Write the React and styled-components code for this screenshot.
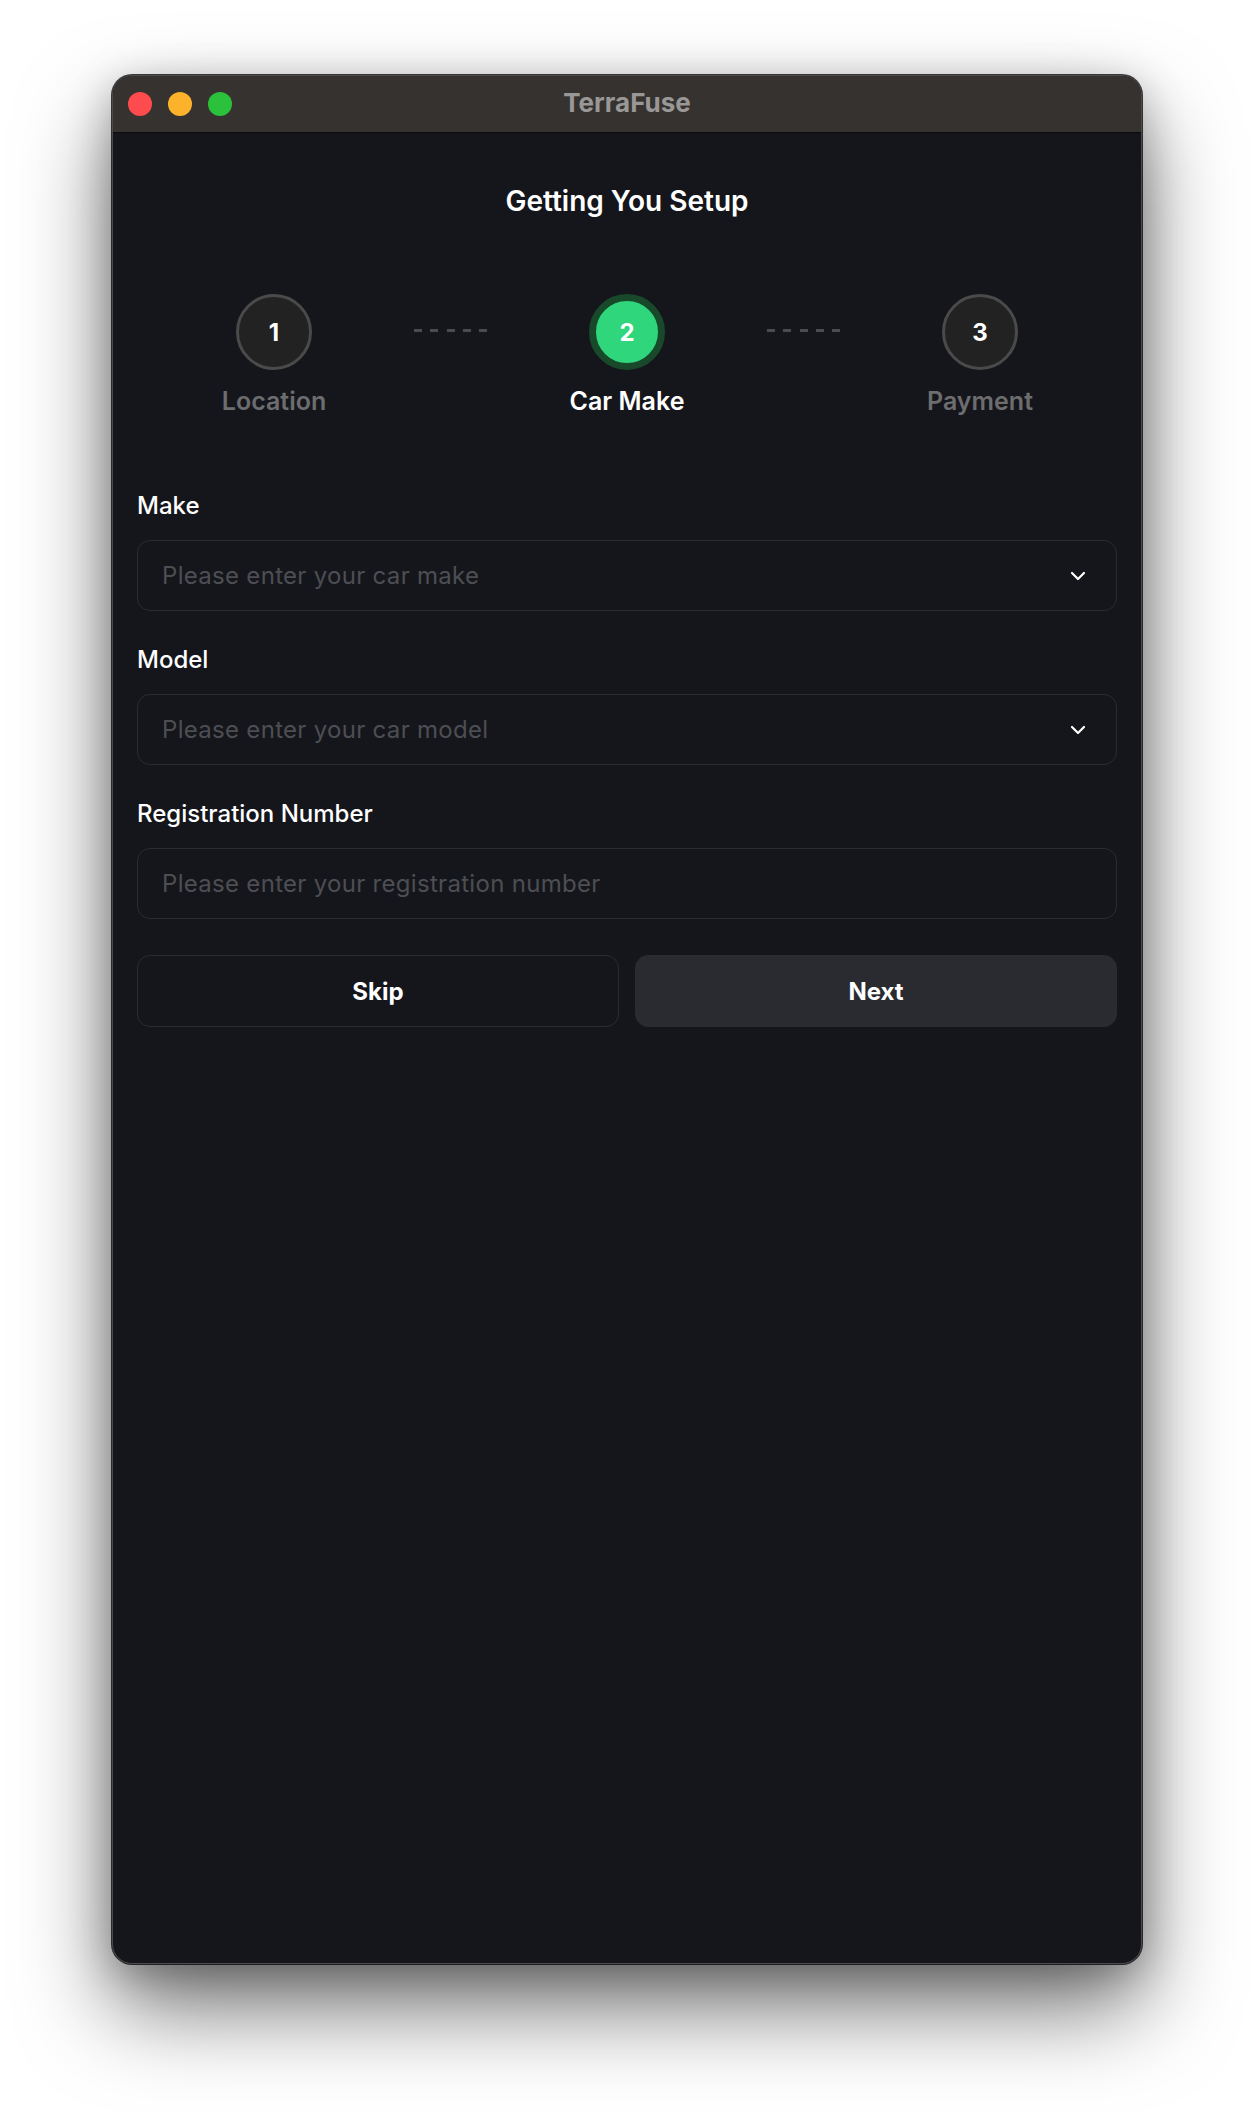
import styled, { createGlobalStyle } from "styled-components";

const GlobalStyle = createGlobalStyle`
  html, body {
    margin: 0;
    padding: 0;
    background: #ffffff;
  }
  body {
    font-family: Inter, "Noto Sans", "Liberation Sans", sans-serif;
    -webkit-font-smoothing: antialiased;
  }
`;

// page around the window
const Desktop = styled.div`
  padding: 75px 112px 148px;
`;

const Window = styled.div`
  width: 1030px;
  height: 1889px;
  box-sizing: border-box;
  border-radius: 20px;
  overflow: hidden;
  background: #15161b;
  border: 1px solid #4a4a4f;
  box-shadow: 0 0 0 1px rgba(0, 0, 0, 0.75), 0 44px 90px rgba(0, 0, 0, 0.55),
    0 10px 40px rgba(0, 0, 0, 0.25);
  display: flex;
  flex-direction: column;
`;

const TitleBar = styled.div`
  height: 56px;
  flex-shrink: 0;
  background: #353230;
  border-bottom: 1px solid #0b0b0c;
  display: flex;
  align-items: center;
  position: relative;
  padding-left: 15px;
`;

const Lights = styled.div`
  display: flex;
  gap: 16px;
`;

const Light = styled.span`
  width: 24px;
  height: 24px;
  border-radius: 50%;
  background: ${(p) => p.color};
`;

const WindowTitle = styled.div`
  position: absolute;
  left: 0;
  right: 0;
  top: 12px;
  text-align: center;
  font-size: 26px;
  line-height: 30px;
  font-weight: 700;
  color: #9a9896;
  pointer-events: none;
`;

const Content = styled.div`
  flex: 1;
  padding: 50px 24px 0;
  display: flex;
  flex-direction: column;
`;

const Heading = styled.h1`
  margin: 0;
  text-align: center;
  font-size: 28px;
  line-height: 36px;
  font-weight: 600;
  color: #ffffff;
`;

// stepper
const Stepper = styled.div`
  display: flex;
  justify-content: center;
  align-items: flex-start;
  margin-top: 75px;
`;

const Step = styled.div`
  width: 160px;
  display: flex;
  flex-direction: column;
  align-items: center;
  gap: 16px;
`;

const Circle = styled.div`
  width: 76px;
  height: 76px;
  box-sizing: border-box;
  border-radius: 50%;
  display: flex;
  align-items: center;
  justify-content: center;
  font-size: 24px;
  font-weight: 700;
  color: #ffffff;
  background: ${(p) => (p.active ? "#2fd67b" : "#222222")};
  border: ${(p) => (p.active ? "7px solid #18492b" : "3px solid #4a4a4b")};
`;

const StepLabel = styled.div`
  font-size: 25px;
  line-height: 30px;
  font-weight: 600;
  color: ${(p) => (p.active ? "#ffffff" : "#6d6d70")};
`;

const Connector = styled.div`
  width: 73px;
  height: 3px;
  margin: 35px 60px 0;
  background: repeating-linear-gradient(
    to right,
    #4b4b4f 0 8px,
    transparent 8px 16.3px
  );
`;

// form
const Form = styled.div`
  margin-top: 75px;
  display: flex;
  flex-direction: column;
  gap: 34px;
`;

const Field = styled.div`
  display: flex;
  flex-direction: column;
  gap: 20px;
`;

const Label = styled.label`
  font-size: 24px;
  line-height: 29px;
  font-weight: 500;
  color: #ffffff;
`;

const InputBox = styled.div`
  height: 71px;
  box-sizing: border-box;
  border: 1.5px solid #2b2c31;
  border-radius: 13px;
  background: #15161b;
  display: flex;
  align-items: center;
  justify-content: space-between;
  padding: 0 30px 0 24px;
`;

const Placeholder = styled.span`
  font-size: 24px;
  letter-spacing: 0.3px;
  color: #4d4e53;
`;

const Actions = styled.div`
  display: grid;
  grid-template-columns: 1fr 1fr;
  gap: 16px;
  margin-top: 36px;
`;

const Button = styled.button`
  height: 72px;
  border-radius: 13px;
  font-family: inherit;
  font-size: 24px;
  font-weight: 700;
  color: #ffffff;
  background: ${(p) => (p.primary ? "#2a2b30" : "#15161b")};
  border: 1.5px solid ${(p) => (p.primary ? "#2a2b30" : "#2b2c31")};
`;

const Chevron = () => (
  <svg width="16" height="10" viewBox="0 0 16 10">
    <path
      d="M2 2 L8 8 L14 2"
      fill="none"
      stroke="#ffffff"
      strokeWidth="2.2"
      strokeLinecap="round"
      strokeLinejoin="round"
    />
  </svg>
);

const steps = [
  { n: 1, label: "Location" },
  { n: 2, label: "Car Make", active: true },
  { n: 3, label: "Payment" },
];

const fields = [
  { label: "Make", placeholder: "Please enter your car make", select: true },
  { label: "Model", placeholder: "Please enter your car model", select: true },
  {
    label: "Registration Number",
    placeholder: "Please enter your registration number",
  },
];

const App = () => {
  return (
    <Desktop>
      <GlobalStyle />
      <Window>
        <TitleBar>
          <Lights>
            <Light color="#fe4b4e" />
            <Light color="#fdb22b" />
            <Light color="#2cc13b" />
          </Lights>
          <WindowTitle>TerraFuse</WindowTitle>
        </TitleBar>

        <Content>
          <Heading>Getting You Setup</Heading>

          <Stepper>
            {steps.map((s, i) => (
              <>
                {i > 0 && <Connector key={"c" + i} />}
                <Step key={s.n}>
                  <Circle active={s.active}>{s.n}</Circle>
                  <StepLabel active={s.active}>{s.label}</StepLabel>
                </Step>
              </>
            ))}
          </Stepper>

          <Form>
            {fields.map((f) => (
              <Field key={f.label}>
                <Label>{f.label}</Label>
                <InputBox>
                  <Placeholder>{f.placeholder}</Placeholder>
                  {f.select && <Chevron />}
                </InputBox>
              </Field>
            ))}
          </Form>

          <Actions>
            <Button>Skip</Button>
            <Button primary>Next</Button>
          </Actions>
        </Content>
      </Window>
    </Desktop>
  );
};

export default App;
